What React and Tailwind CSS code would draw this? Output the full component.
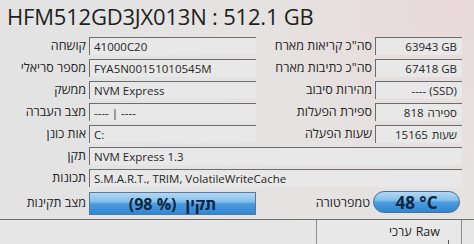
const FONT = "font-['Open_Sans','Liberation_Sans','DejaVu_Sans',sans-serif]";

const Box = ({ children, className = "" }) => (
  <div
    className={`h-[18px] flex items-center border-t border-l border-[#6c6c6c] bg-[#e9e8e8] px-[4px] text-[11.5px] leading-none whitespace-nowrap overflow-hidden ${className}`}
  >
    {children}
  </div>
);

const Label = ({ children, className = "" }) => (
  <div
    dir="rtl"
    className={`text-[12.5px] leading-none whitespace-nowrap ${className}`}
  >
    {children}
  </div>
);

// number on the left, hebrew word on the right
const Count = ({ n, word }) => (
  <span className="flex gap-[4px]">
    <span>{n}</span>
    <span dir="rtl">{word}</span>
  </span>
);

const rows = [
  ["קושחה", "41000C20", 'סה"כ קריאות מארח', "63943 GB"],
  ["מספר סריאלי", "FYA5N00151010545M", 'סה"כ כתיבות מארח', "67418 GB"],
  ["ממשק", "NVM Express", "מהירות סיבוב", "---- (SSD)"],
  ["מצב העברה", "---- | ----", "ספירת הפעלות", <Count n="818" word="ספירה" />],
  ["אות כונן", "C:", "שעות הפעלה", <Count n="15165" word="שעות" />],
];

const glossy =
  "bg-[linear-gradient(to_bottom,#b3d8f3_0%,#86c0ea_40%,#4d9ade_52%,#2f87d2_100%)]";

export default function App() {
  return (
    <div
      className={`${FONT} w-[474px] h-[244px] overflow-hidden flex flex-col text-[#262626] bg-[radial-gradient(circle_at_95%_0%,#e9d9da_0%,#e6e2e2_35%,#e4e3e3_70%)]`}
    >
      <div className="h-[35px] pl-[7px] pt-[1px] text-[22px] leading-[30px] text-[#1e1e1e] tracking-[-0.2px]">
        HFM512GD3JX013N : 512.1 GB
      </div>

      <div className="flex flex-col gap-[4px] pt-[2px]">
        {rows.map(([l1, v1, l2, v2]) => (
          <div key={l1} className="flex items-center">
            <div className="w-[89px] flex justify-end pr-[3px]">
              <Label>{l1}</Label>
            </div>
            <Box className="w-[167px]">{v1}</Box>
            <div className="w-[119px] flex justify-end pr-[3px]">
              <Label>{l2}</Label>
            </div>
            <Box className="w-[87px] justify-end pr-[5px]">{v2}</Box>
          </div>
        ))}

        <div className="flex items-center">
          <div className="w-[89px] flex justify-end pr-[3px]">
            <Label>תקן</Label>
          </div>
          <Box className="w-[373px]">NVM Express 1.3</Box>
        </div>
        <div className="flex items-center">
          <div className="w-[89px] flex justify-end pr-[3px]">
            <Label>תכונות</Label>
          </div>
          <Box className="w-[373px]">S.M.A.R.T., TRIM, VolatileWriteCache</Box>
        </div>

        <div className="flex items-center mt-[1px]">
          <div className="w-[89px] flex justify-end pr-[3px]">
            <Label>מצב תקינות</Label>
          </div>
          <div
            className={`w-[167px] h-[23px] flex items-center justify-center gap-[9px] border border-[#58779a] ${glossy} text-[16px] font-bold text-[#0b2542] leading-none`}
          >
            <span>(98 %)</span>
            <span dir="rtl">תקין</span>
          </div>
          <div className="w-[117px] flex justify-end pr-[3px]">
            <Label>טמפרטורה</Label>
          </div>
          <div
            className={`w-[87px] h-[22px] -mt-[3px] rounded-full flex items-center justify-center border border-[#4f6f92] ${glossy} text-[17px] font-bold text-[#0b2542] leading-none`}
          >
            48 °C
          </div>
        </div>
      </div>

      <div className="mt-[4px] flex-1 flex border-t border-[#707070] bg-[#e7e6e6]">
        <div className="w-[316px]" />
        <div className="w-[146px] h-full flex flex-col border-l border-r border-[#8d8d8d] bg-[#e9e8e8]">
          <div className="h-[15px] flex items-center justify-end gap-[4px] pr-[21px] text-[12.5px] leading-none mt-[5px]">
            <span dir="rtl">ערכי</span>
            <span>Raw</span>
          </div>
          <div className="flex-1 flex justify-end pr-[12px]">
            <div className="w-px h-full bg-[#5a5a5a]" />
          </div>
        </div>
      </div>
    </div>
  );
}
